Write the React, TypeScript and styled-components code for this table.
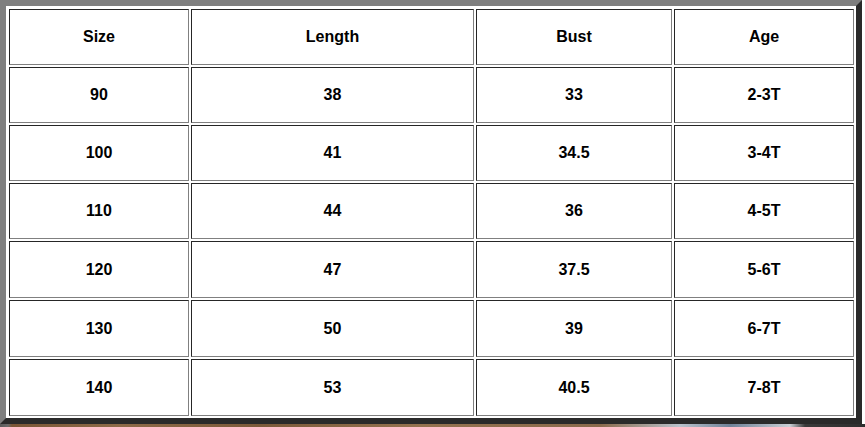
import React from "react";
import styled, { createGlobalStyle } from "styled-components";

const GlobalStyle = createGlobalStyle`
  html, body {
    margin: 0;
    padding: 0;
    background: #ffffff;
  }
  body {
    font-family: "Liberation Sans", Arial, sans-serif;
  }
`;

const Page = styled.div`
  width: 865px;
  height: 427px;
  overflow: hidden;
  display: flex;
  flex-direction: column;
`;

const SizeTable = styled.table`
  width: 862px;
  box-sizing: border-box;
  border-collapse: separate;
  border-spacing: 2px;
  border-style: solid;
  border-width: 6px;
  border-color: #7f7f7f #2a2a2a #2a2a2a #7f7f7f;
  padding: 1px 0 0 1px;
  table-layout: fixed;
  background: #ffffff;
  flex: none;
`;

const Cell = styled.td<{ $h: number }>`
  box-sizing: border-box;
  height: ${(p) => p.$h}px;
  padding: 0;
  border: 1px solid;
  border-color: #262626 #808080 #808080 #262626;
  text-align: center;
  vertical-align: middle;
  font-family: "Liberation Sans", Arial, sans-serif;
  font-weight: bold;
  font-size: 16px;
  line-height: 18px;
  color: #000000;
`;

const PhotoStrip = styled.div`
  height: 6px;
  width: 865px;
  flex: none;
  background: linear-gradient(
    to right,
    #5a5a5a 0px,
    #6b6b6b 8px,
    #7a5636 12px,
    #8d6a48 120px,
    #7c5a3a 260px,
    #94724f 420px,
    #8a6a4c 600px,
    #b9c2cc 680px,
    #6f8298 730px,
    #c9ced4 790px,
    #3a3a3a 805px,
    #2e2e2e 865px
  );
`;

const colWidths = [180, 283, 196, 180];

const rows: string[][] = [
  ["Size", "Length", "Bust", "Age"],
  ["90", "38", "33", "2-3T"],
  ["100", "41", "34.5", "3-4T"],
  ["110", "44", "36", "4-5T"],
  ["120", "47", "37.5", "5-6T"],
  ["130", "50", "39", "6-7T"],
  ["140", "53", "40.5", "7-8T"],
];

const rowHeights = [56, 56, 56, 56, 57, 57, 57];

export default function App() {
  return (
    <>
      <GlobalStyle />
      <Page>
        <SizeTable>
          <colgroup>
            {colWidths.map((w, i) => (
              <col key={i} style={{ width: w }} />
            ))}
          </colgroup>
          <tbody>
            {rows.map((r, ri) => (
              <tr key={ri}>
                {r.map((c, ci) => (
                  <Cell key={ci} $h={rowHeights[ri]}>
                    {c}
                  </Cell>
                ))}
              </tr>
            ))}
          </tbody>
        </SizeTable>
        <PhotoStrip />
      </Page>
    </>
  );
}
